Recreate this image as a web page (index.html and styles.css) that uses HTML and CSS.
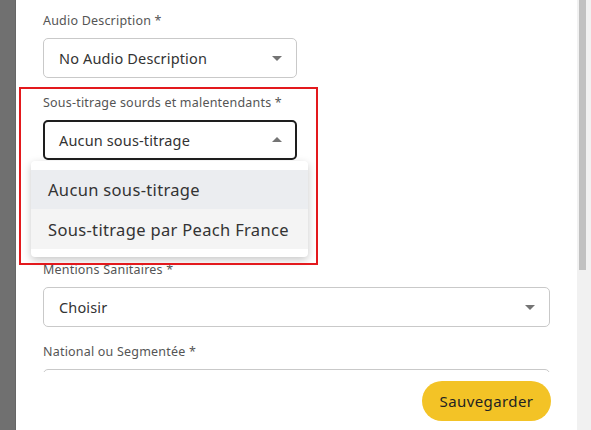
FILE: index.html
```html
<!DOCTYPE html>
<html lang="fr">
<head>
<meta charset="utf-8">
<title>Formulaire</title>
<link rel="stylesheet" href="styles.css">
</head>
<body>
<div class="screen">
  <div class="backdrop"></div>
  <div class="panel">
    <div class="scroll">
      <div class="field">
        <div class="label">Audio Description *</div>
        <div class="select select--narrow">
          <span class="value">No Audio Description</span>
          <span class="caret"></span>
        </div>
      </div>
      <div class="field field--open">
        <div class="label">Sous-titrage sourds et malentendants *</div>
        <div class="select select--narrow select--active">
          <span class="value">Aucun sous-titrage</span>
          <span class="caret caret--up"></span>
        </div>
        <ul class="menu">
          <li class="option option--selected">Aucun sous-titrage</li>
          <li class="option option--hover">Sous-titrage par Peach France</li>
        </ul>
      </div>
      <div class="field">
        <div class="label">Mentions Sanitaires *</div>
        <div class="select">
          <span class="value">Choisir</span>
          <span class="caret"></span>
        </div>
      </div>
      <div class="field">
        <div class="label">National ou Segmentée *</div>
        <div class="select"></div>
      </div>
    </div>
    <div class="footer">
      <button class="save">Sauvegarder</button>
    </div>
    <div class="highlight"></div>
  </div>
  <div class="scrollbar"><div class="thumb"></div></div>
</div>
</body>
</html>
```

FILE: styles.css
```css
* { box-sizing: border-box; }
html, body { margin: 0; padding: 0; }
body {
  font-family: "Noto Sans", "Open Sans", sans-serif;
  background: #fff;
  color: #333;
}
.screen {
  display: flex;
  width: 591px;
  height: 430px;
  overflow: hidden;
}
.backdrop {
  width: 16px;
  flex: none;
  background: #707070;
  border-right: 1px solid #666;
}
.panel {
  position: relative;
  flex: 1;
  display: flex;
  flex-direction: column;
  background: #fff;
}
.scroll {
  height: 372px;
  overflow: hidden;
  padding: 12px 0 0 27px;
}
.field { position: relative; margin-bottom: 16px; }
.field--open { margin-bottom: 101px; }
.label {
  font-size: 12.5px;
  line-height: 18px;
  color: #555;
  letter-spacing: 0.2px;
  margin-bottom: 8px;
}
.select {
  position: relative;
  display: flex;
  align-items: center;
  width: 507px;
  height: 40px;
  border: 1px solid #c9c9c9;
  border-radius: 5px;
  padding-left: 15px;
  font-size: 14.5px;
  letter-spacing: 0.15px;
  color: #333;
}
.select--narrow { width: 254px; }
.select--active { border: 2px solid #1e1e1e; padding-left: 14px; }
.caret {
  position: absolute;
  right: 14px;
  top: 50%;
  margin-top: -2px;
  width: 0;
  height: 0;
  border-left: 5px solid transparent;
  border-right: 5px solid transparent;
  border-top: 5px solid #747474;
}
.caret--up {
  border-top: 0;
  border-bottom: 5px solid #747474;
  right: 13px;
  margin-top: -3px;
}
.menu {
  position: absolute;
  left: -12px;
  top: 67px;
  width: 277px;
  margin: 0;
  padding: 9px 0 8px;
  list-style: none;
  background: #fff;
  border-radius: 4px;
  box-shadow: 0 3px 8px rgba(0, 0, 0, 0.22);
  z-index: 2;
}
.option {
  height: 39px;
  display: flex;
  align-items: center;
  padding-left: 17px;
  font-size: 16.5px;
  letter-spacing: 0.33px;
  color: #333;
}
.option--selected { background: #ebedf0; }
.option--hover { background: #f4f4f4; height: 40px; }
.footer {
  flex: 1;
  display: flex;
  justify-content: flex-end;
  align-items: flex-start;
  padding: 9px 26px 0 0;
  background: #fff;
}
.save {
  width: 129px;
  height: 40px;
  border: 0;
  border-radius: 20px;
  background: #f3c326;
  font-family: "Noto Sans", "Open Sans", sans-serif;
  font-size: 15px;
  color: #222;
  letter-spacing: 0.4px;
}
.highlight {
  position: absolute;
  left: 3px;
  top: 87px;
  width: 299px;
  height: 178px;
  border: 2px solid #e3191d;
  z-index: 3;
  pointer-events: none;
}
.scrollbar {
  width: 14px;
  flex: none;
  background: #f1f1f1;
  padding-left: 2px;
}
.thumb {
  width: 7px;
  height: 270px;
  background: #c1c1c1;
}
```
